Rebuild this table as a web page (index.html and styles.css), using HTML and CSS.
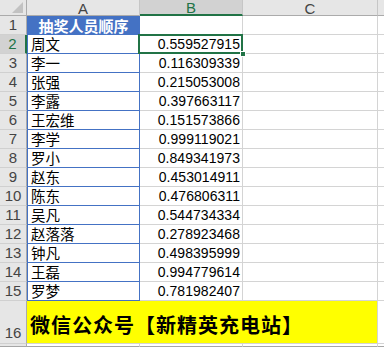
FILE: index.html
```html
<!DOCTYPE html>
<html lang="zh">
<head>
<meta charset="utf-8">
<link rel="stylesheet" href="styles.css">
</head>
<body>
<div class="sheet">
  <div class="corner"><span class="tri"></span></div>
  <div class="ch">A</div>
  <div class="ch sel">B</div>
  <div class="ch">C</div>
  <div class="ch last"></div>

  <div class="rh">1</div>
  <div class="a title">抽奖人员顺序</div>
  <div class="c"></div><div class="c"></div><div class="c last"></div>

  <div class="rh selr">2</div>
  <div class="a">周文</div>
  <div class="c num active">0.559527915<span class="box"></span><span class="handle"></span></div>
  <div class="c"></div><div class="c last"></div>

  <div class="rh">3</div><div class="a">李一</div><div class="c num">0.116309339</div><div class="c"></div><div class="c last"></div>
  <div class="rh">4</div><div class="a">张强</div><div class="c num">0.215053008</div><div class="c"></div><div class="c last"></div>
  <div class="rh">5</div><div class="a">李露</div><div class="c num">0.397663117</div><div class="c"></div><div class="c last"></div>
  <div class="rh">6</div><div class="a">王宏维</div><div class="c num">0.151573866</div><div class="c"></div><div class="c last"></div>
  <div class="rh">7</div><div class="a">李学</div><div class="c num">0.999119021</div><div class="c"></div><div class="c last"></div>
  <div class="rh">8</div><div class="a">罗小</div><div class="c num">0.849341973</div><div class="c"></div><div class="c last"></div>
  <div class="rh">9</div><div class="a">赵东</div><div class="c num">0.453014911</div><div class="c"></div><div class="c last"></div>
  <div class="rh">10</div><div class="a">陈东</div><div class="c num">0.476806311</div><div class="c"></div><div class="c last"></div>
  <div class="rh">11</div><div class="a">吴凡</div><div class="c num">0.544734334</div><div class="c"></div><div class="c last"></div>
  <div class="rh">12</div><div class="a">赵落落</div><div class="c num">0.278923468</div><div class="c"></div><div class="c last"></div>
  <div class="rh">13</div><div class="a">钟凡</div><div class="c num">0.498395999</div><div class="c"></div><div class="c last"></div>
  <div class="rh">14</div><div class="a">王磊</div><div class="c num">0.994779614</div><div class="c"></div><div class="c last"></div>
  <div class="rh">15</div><div class="a">罗梦</div><div class="c num">0.781982407</div><div class="c"></div><div class="c last"></div>

  <div class="rh tall">16</div>
  <div class="banner">微信公众号【新精英充电站】</div>
  <div class="c last"></div>

  <div class="rh foot"></div><div class="c foot"></div><div class="c foot"></div><div class="c foot"></div><div class="c foot last"></div>
</div>
</body>
</html>
```

FILE: styles.css
```css
* { box-sizing: border-box; }
html, body { margin: 0; padding: 0; background: #fff; }
body { width: 384px; height: 347px; overflow: hidden; }

.sheet {
  display: grid;
  grid-template-columns: 27px 113px 103px 135px 1fr;
  grid-template-rows: 16px repeat(15, 19px) 43px 4px;
  font-family: "Liberation Sans", "Noto Sans CJK SC", sans-serif;
  font-size: 14px;
  color: #000;
  width: 384px;
}

.corner {
  background: #e6e6e6;
  border-right: 1px solid #ababab;
  border-bottom: 1px solid #ababab;
  position: relative;
}
.corner .tri {
  position: absolute;
  right: 3px;
  bottom: 2px;
  width: 0; height: 0;
  border-left: 11px solid transparent;
  border-bottom: 11px solid #c2c2c2;
}

.ch {
  background: #e6e6e6;
  border-right: 1px solid #c6c6c6;
  border-bottom: 1px solid #ababab;
  color: #444;
  font-size: 15px;
  display: flex;
  align-items: center;
  justify-content: center;
  line-height: 1;
  padding-top: 1px;
  overflow: hidden;
}
.ch.sel {
  background: #d2d2d2;
  color: #217346;
  border-bottom: 2px solid #217346;
}
.ch.last { border-right: none; }

.rh {
  background: #e6e6e6;
  border-right: 1px solid #ababab;
  border-bottom: 1px solid #d0d0d0;
  color: #444;
  font-size: 15px;
  display: flex;
  align-items: flex-end;
  justify-content: center;
  line-height: 1;
  padding-bottom: 2px;
}
.rh.selr {
  background: #d2d2d2;
  color: #217346;
  border-right: 2px solid #217346;
}
.rh.tall { padding-bottom: 3px; }

.c {
  border-right: 1px solid #d4d4d4;
  border-bottom: 1px solid #d4d4d4;
  display: flex;
  align-items: flex-end;
  line-height: 1;
  padding-bottom: 2px;
}
.c.last { border-right: none; }
.num {
  justify-content: flex-end;
  padding-right: 2px;
  letter-spacing: 0.05px;
}

.a {
  border-left: 1px solid #4472c4;
  border-right: 1px solid #4472c4;
  border-bottom: 1px solid #4472c4;
  display: flex;
  align-items: flex-end;
  padding: 0 0 2px 3px;
  line-height: 1;
  font-family: "Noto Sans CJK SC", sans-serif;
  font-size: 14.5px;
}
.a.title {
  background: #4472c4;
  color: #fff;
  font-weight: bold;
  font-size: 15px;
  align-items: center;
  justify-content: center;
  padding: 1px 0 0 0;
  line-height: 15px;
}

.active { position: relative; }
.box {
  position: absolute;
  left: -2px;
  top: -1px;
  right: -1px;
  bottom: -1px;
  border: 2px solid #217346;
  z-index: 2;
}
.handle {
  position: absolute;
  right: -4px;
  bottom: -4px;
  width: 6px;
  height: 6px;
  background: #217346;
  border: 1px solid #fff;
  z-index: 3;
}

.banner {
  grid-column: 2 / span 3;
  background: #ffff00;
  border-bottom: 1px solid #d4d4d4;
  border-right: 1px solid #d4d4d4;
  display: flex;
  align-items: flex-end;
  padding: 0 0 8px 3px;
  font-family: "Noto Sans CJK SC", sans-serif;
  font-weight: bold;
  font-size: 20px;
  letter-spacing: 1px;
  line-height: 1;
  white-space: nowrap;
}

.foot { border-bottom: 2px solid #a6a6a6; padding: 0; }
```
